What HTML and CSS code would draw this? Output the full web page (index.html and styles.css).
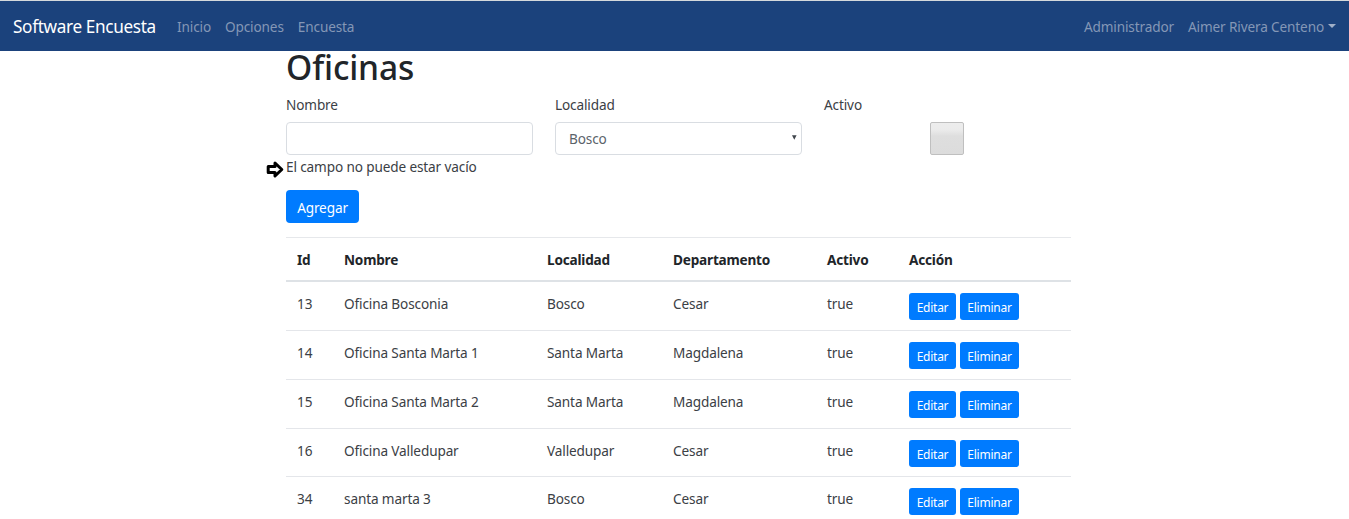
FILE: index.html
```
<!DOCTYPE html>
<html lang="es">
<head>
<meta charset="utf-8">
<title>Software Encuesta</title>
<link rel="stylesheet" href="styles.css">
</head>
<body>
<nav class="navbar">
  <a class="brand">Software Encuesta</a>
  <div class="links"><a>Inicio</a><a>Opciones</a><a>Encuesta</a></div>
  <div class="links user"><a>Administrador</a><a class="dropdown"><span>Aimer Rivera Centeno</span><i class="caret"></i></a></div>
</nav>
<main class="container">
  <h1>Oficinas</h1>
  <form class="form">
    <div class="field">
      <label>Nombre</label>
      <div class="control"></div>
      <p class="error"><svg class="arrow" viewBox="0 0 19 19" width="19" height="19"><path d="M2.2 6.4H9V3L15.8 9.5L9 16V12.6H2.2Z" fill="#fff" stroke="#000" stroke-width="3" stroke-linejoin="round"/></svg><span>El campo no puede estar vacío</span></p>
    </div>
    <div class="field">
      <label>Localidad</label>
      <div class="control select"><span>Bosco</span><svg viewBox="0 0 5 5" width="5" height="5"><path d="M0 .3H4.6L2.3 4.8Z" fill="#40464c"/></svg></div>
    </div>
    <div class="field">
      <label>Activo</label>
      <div class="check"></div>
    </div>
  </form>
  <button class="btn add">Agregar</button>
  <table class="table">
    <colgroup><col class="c1"><col class="c2"><col class="c3"><col class="c4"><col class="c5"><col></colgroup>
    <thead><tr><th>Id</th><th>Nombre</th><th>Localidad</th><th>Departamento</th><th>Activo</th><th>Acción</th></tr></thead>
    <tbody>
      <tr><td>13</td><td>Oficina Bosconia</td><td>Bosco</td><td>Cesar</td><td>true</td><td><div class="actions"><button class="btn edit">Editar</button><button class="btn del">Eliminar</button></div></td></tr>
      <tr><td>14</td><td>Oficina Santa Marta 1</td><td>Santa Marta</td><td>Magdalena</td><td>true</td><td><div class="actions"><button class="btn edit">Editar</button><button class="btn del">Eliminar</button></div></td></tr>
      <tr><td>15</td><td>Oficina Santa Marta 2</td><td>Santa Marta</td><td>Magdalena</td><td>true</td><td><div class="actions"><button class="btn edit">Editar</button><button class="btn del">Eliminar</button></div></td></tr>
      <tr class="short"><td>16</td><td>Oficina Valledupar</td><td>Valledupar</td><td>Cesar</td><td>true</td><td><div class="actions"><button class="btn edit">Editar</button><button class="btn del">Eliminar</button></div></td></tr>
      <tr><td>34</td><td>santa marta 3</td><td>Bosco</td><td>Cesar</td><td>true</td><td><div class="actions"><button class="btn edit">Editar</button><button class="btn del">Eliminar</button></div></td></tr>
    </tbody>
  </table>
</main>
</body>
</html>
```
FILE: styles.css
```
* { box-sizing: border-box; }
body {
  margin: 0;
  height: 519px;
  overflow: hidden;
  background: #fff;
  color: #3b4045;
  font: 13.6px/22px "Noto Sans", "Open Sans", sans-serif;
  letter-spacing: -0.13px;
}
.navbar {
  display: flex;
  align-items: center;
  height: 51px;
  padding: 2px 13px 0;
  background: #1b427c;
  border-top: 1px solid #d5d9dc;
  white-space: nowrap;
}
.brand { width: 164px; color: #fff; font-size: 17.2px; letter-spacing: -0.35px; }
.links { display: flex; gap: 14px; color: #8497b6; }
.user { margin-left: auto; }
.dropdown { display: flex; align-items: center; }
.caret {
  margin: -2px 0 0 4px;
  border: 4px solid transparent;
  border-top-color: #a0afc8;
  border-bottom: 0;
}
.container { width: 785px; margin-left: 286px; }
h1 {
  margin: 0;
  height: 43px;
  color: #212529;
  font-size: 33.5px;
  font-weight: 500;
  line-height: 32px;
}
.form { display: grid; grid-template-columns: repeat(3, 247px); column-gap: 22px; height: 96px; }
label { display: block; height: 28px; line-height: 22px; }
.control { height: 33px; border: 1px solid #d9dde2; border-radius: 4px; }
.select {
  display: flex;
  align-items: center;
  justify-content: space-between;
  padding: 1px 4px 0 13px;
  color: #5b636a;
}
.select svg { margin-top: -3px; }
.error { position: relative; margin: 1px 0 0; line-height: 22px; white-space: nowrap; }
.arrow { position: absolute; left: -20px; top: 4px; }
.check {
  width: 34px;
  height: 33px;
  margin-left: 106px;
  border: 1px solid #bfbfbf;
  border-radius: 2px;
  background: linear-gradient(#ededed, #ebebeb 22%, #dedede 42%, #dcdcdc);
}
.btn {
  display: block;
  padding: 0;
  border: 0;
  border-radius: 3px;
  background: #007bff;
  color: #fff;
  font-family: inherit;
  letter-spacing: -0.13px;
  text-align: center;
}
.add { width: 73px; height: 33px; padding-top: 2px; font-size: 13.6px; border-radius: 4px; }
.table {
  width: 785px;
  margin-top: 14px;
  border-collapse: separate;
  border-spacing: 0;
  table-layout: fixed;
}
.c1 { width: 47px; }
.c2 { width: 203px; }
.c3 { width: 126px; }
.c4 { width: 154px; }
.c5 { width: 82px; }
th, td { padding: 0 0 0 11px; text-align: left; white-space: nowrap; }
th { height: 45px; padding-top: 2px; border-top: 1px solid #e6e8eb; border-bottom: 2px solid #dee2e6; color: #212529; font-weight: 700; letter-spacing: -0.2px; }
td { height: 49px; padding-top: 11px; border-bottom: 1px solid #e4e6ea; vertical-align: top; }
.short td { height: 48px; }
.actions { display: flex; gap: 4px; }
.actions .btn { height: 27px; padding-top: 1px; font-size: 12px; letter-spacing: -0.25px; }
.edit { width: 47px; }
.del { width: 59px; }
```
